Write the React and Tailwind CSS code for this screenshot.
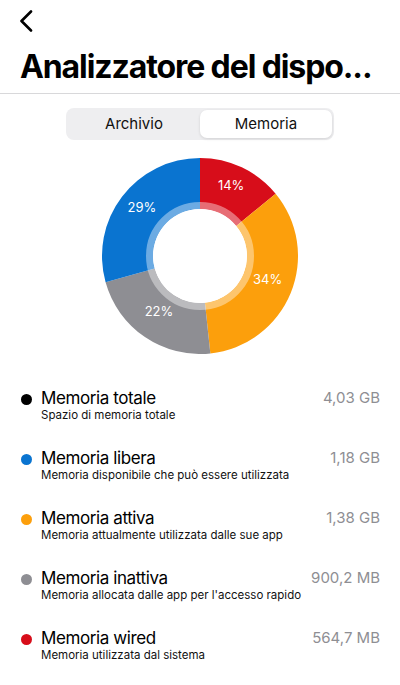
import React from 'react';

const items=[
  { name:'Memoria totale', desc:'Spazio di memoria totale', value:'4,03 GB', color:'bg-black' },
  { name:'Memoria libera', desc:'Memoria disponibile che può essere utilizzata', value:'1,18 GB', color:'bg-[#0a74d0]' },
  { name:'Memoria attiva', desc:'Memoria attualmente utilizzata dalle sue app', value:'1,38 GB', color:'bg-[#fc9f0c]' },
  { name:'Memoria inattiva', desc:"Memoria allocata dalle app per l'accesso rapido", value:'900,2 MB', color:'bg-[#8e8e93]' },
  { name:'Memoria wired', desc:'Memoria utilizzata dal sistema', value:'564,7 MB', color:'bg-[#d70d1a]' },
];

// slices in clockwise order starting at 12 o'clock
const slices=[
  { v:564.7, fill:'#d70d1a', label:'14%' },
  { v:1380, fill:'#fc9f0c', label:'34%' },
  { v:900.2, fill:'#8e8e93', label:'22%' },
  { v:1180, fill:'#0a74d0', label:'29%' },
];

const pt=(cx, cy, r, a)=>{
  const rad=(a-90)*Math.PI/180;
  return [cx+r*Math.cos(rad), cy+r*Math.sin(rad)];
};

const Donut=()=>{
  const cx=98, cy=98, R=98, r=47;
  const total=slices.reduce((s, x)=>s+x.v, 0);
  let start=0;
  return (
    <svg width="196" height="196" viewBox="0 0 196 196">
      {slices.map((s, i)=>{
        const sweep=s.v/total*360;
        const end=start+sweep;
        const large=sweep>180?1:0;
        const [x1, y1]=pt(cx, cy, R, start);
        const [x2, y2]=pt(cx, cy, R, end);
        const [x3, y3]=pt(cx, cy, r, end);
        const [x4, y4]=pt(cx, cy, r, start);
        const d=`M${x1} ${y1} A${R} ${R} 0 ${large} 1 ${x2} ${y2} L${x3} ${y3} A${r} ${r} 0 ${large} 0 ${x4} ${y4} Z`;
        const [lx, ly]=pt(cx, cy, 73, start+sweep/2);
        start=end;
        return (
          <g key={i}>
            <path d={d} fill={s.fill}/>
            <text x={lx} y={ly-5} fill="white" fontSize="13" textAnchor="middle" dominantBaseline="central" fontFamily="Inter, sans-serif">{s.label}</text>
          </g>
        );
      })}
      <circle cx={cx} cy={cy} r={50.5} fill="none" stroke="white" strokeOpacity="0.4" strokeWidth="7"/>
      <circle cx={cx} cy={cy} r={47} fill="white"/>
    </svg>
  );
};

export default function App() {
  return (
    <div className="w-[400px] h-[685px] bg-white overflow-hidden font-['Inter',sans-serif] text-black">
      <div className="h-[40px] pl-[19px] pt-[10px]">
        <svg width="14" height="22" viewBox="0 0 14 22" fill="none">
          <path d="M12 1.5L2.5 11L12 20.5" stroke="black" strokeWidth="2.6" strokeLinecap="round" strokeLinejoin="round"/>
        </svg>
      </div>
      <h1 className="px-5 pt-[7px] text-[32px] leading-[40px] font-bold tracking-[-1.1px] whitespace-nowrap">Analizzatore del dispo...</h1>
      <div className="mt-[6px] h-px bg-[#d8d8da]"/>
      <div className="flex justify-center mt-[14px]">
        <div className="w-[268px] h-[32px] rounded-[8px] bg-[#eeeef0] p-[2px] flex">
          <div className="flex-1 flex items-center justify-center text-[15px] text-[#111]">Archivio</div>
          <div className="flex-1 flex items-center justify-center text-[15px] text-[#111] bg-white rounded-[7px] shadow-[0_1px_3px_rgba(0,0,0,0.12)]">Memoria</div>
        </div>
      </div>
      <div className="flex justify-center mt-[18px]">
        <Donut/>
      </div>
      <div className="mt-[33px] px-5 flex flex-col">
        {items.map((it)=>(
          <div key={it.name} className="h-[60px] flex items-start">
            <div className={`w-[11px] h-[11px] rounded-full mt-[7px] ml-[1px] ${it.color}`}/>
            <div className="ml-[9px] flex-1">
              <div className="text-[17px] leading-[22px] tracking-[-0.4px]">{it.name}</div>
              <div className="text-[11.5px] leading-[14px] text-[#111] mt-[-1px]">{it.desc}</div>
            </div>
            <div className="text-[15px] leading-[22px] text-[#8e8e93]">{it.value}</div>
          </div>
        ))}
      </div>
    </div>
  );
}
